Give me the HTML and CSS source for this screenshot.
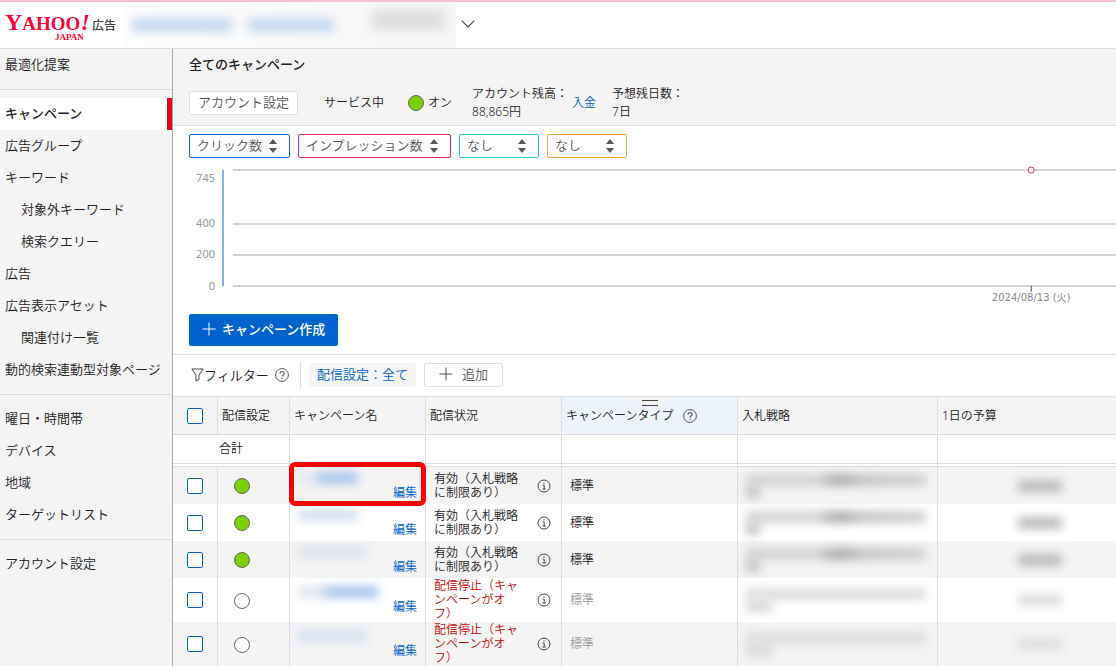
FILE: index.html
```html
<!DOCTYPE html>
<html lang="ja">
<head>
<meta charset="utf-8">
<title>Yahoo! JAPAN 広告</title>
<link rel="stylesheet" href="styles.css">
</head>
<body>
<svg class="defs" width="0" height="0" aria-hidden="true">
  <symbol id="help" viewBox="0 0 14 14"><circle cx="7" cy="7" r="6.4" fill="none" stroke="#555"/><path d="M5 5.6c0-2.8 4.1-2.7 4.1-.2 0 1.5-2.1 1.6-2.1 3.2M7 9.8v1.3" fill="none" stroke="#555" stroke-width="1.1"/></symbol>
  <symbol id="info" viewBox="0 0 14 14"><circle cx="7" cy="7" r="6" fill="none" stroke="#444"/><path d="M5.7 6.1H7.2V10M5.4 10h3.4M7 3.4v1.3" fill="none" stroke="#444"/></symbol>
  <symbol id="sort" viewBox="0 0 8 14"><path d="M4 0 8 5H0zM4 14 0 9H8z" fill="#555"/></symbol>
  <symbol id="plus" viewBox="0 0 14 14"><path d="M7 .5v13M.5 7h13" fill="none" stroke="currentColor"/></symbol>
</svg>

<header class="topbar">
  <a class="logo" href="#">
    <span class="brand"><span class="yahoo"><span class="big">Y</span>AHOO<i class="big">!</i></span><span class="japan">JAPAN</span></span>
    <span class="product">広告</span>
  </a>
  <div class="account" aria-hidden="true">
    <span class="smudge blue account-a"></span>
    <span class="smudge blue account-b"></span>
    <span class="smudge grey account-c"></span>
  </div>
  <button class="chevron" aria-label="アカウントを開く"><svg width="14" height="8" viewBox="0 0 14 8"><path d="M.7.7 7 7 13.300.7" fill="none" stroke="#444" stroke-width="1.1"/></svg></button>
</header>

<div class="layout">
  <nav class="sidebar">
    <div class="group"><a href="#">最適化提案</a></div>
    <div class="group">
      <a href="#" class="current">キャンペーン</a>
      <a href="#">広告グループ</a>
      <a href="#">キーワード</a>
      <a href="#" class="sub">対象外キーワード</a>
      <a href="#" class="sub">検索クエリー</a>
      <a href="#">広告</a>
      <a href="#">広告表示アセット</a>
      <a href="#" class="sub">関連付け一覧</a>
      <a href="#">動的検索連動型対象ページ</a>
    </div>
    <div class="group">
      <a href="#">曜日・時間帯</a>
      <a href="#">デバイス</a>
      <a href="#">地域</a>
      <a href="#">ターゲットリスト</a>
    </div>
    <div class="group"><a href="#">アカウント設定</a></div>
  </nav>

  <main class="main">
    <section class="summary">
      <h1>全てのキャンペーン</h1>
      <div class="facts">
        <button class="plain">アカウント設定</button>
        <span class="service">サービス中</span>
        <span class="state"><span class="dot on"></span>オン</span>
        <span class="balance">アカウント残高：<br>88,865円</span>
        <a class="deposit" href="#">入金</a>
        <span>予想残日数：<br>7日</span>
      </div>
    </section>

    <section class="report">
      <div class="metrics">
        <span class="metric m1"><select aria-label="指標1"><option>クリック数</option></select><svg width="8" height="14"><use href="#sort"/></svg></span>
        <span class="metric m2"><select aria-label="指標2"><option>インプレッション数</option></select><svg width="8" height="14"><use href="#sort"/></svg></span>
        <span class="metric m3"><select aria-label="指標3"><option>なし</option></select><svg width="8" height="14"><use href="#sort"/></svg></span>
        <span class="metric m4"><select aria-label="指標4"><option>なし</option></select><svg width="8" height="14"><use href="#sort"/></svg></span>
      </div>
      <svg class="chart" role="img" aria-label="インプレッション数の推移">
        <g class="grid">
          <line x1="44" x2="100%" y1="12" y2="12"/>
          <line x1="44" x2="100%" y1="66" y2="66"/>
          <line x1="44" x2="100%" y1="97" y2="97"/>
          <line x1="44" x2="100%" y1="128" y2="128"/>
        </g>
        <line class="axis" x1="34" x2="34" y1="12" y2="128"/>
        <g class="scale">
          <text x="26" y="24">745</text>
          <text x="26" y="69">400</text>
          <text x="26" y="100">200</text>
          <text x="26" y="132">0</text>
        </g>
        <line class="tick" x1="90.85%" x2="90.85%" y1="128" y2="134"/>
        <circle class="point" cx="90.85%" cy="12" r="3"/>
        <text class="date" x="90.85%" y="143">2024/08/13 (火)</text>
      </svg>
      <button class="create"><svg width="14" height="14"><use href="#plus"/></svg>キャンペーン作成</button>
    </section>

    <section class="filters">
      <div class="filter-name">
        <svg width="13" height="14" viewBox="0 0 13 14"><path d="M.8 1h11.400L8 7v4.200L5 13V7z" fill="none" stroke="#444" stroke-linejoin="round"/></svg>
        <span>フィルター</span>
        <svg class="filter-help" width="14" height="14"><use href="#help"/></svg>
      </div>
      <button class="chip">配信設定：全て</button>
      <button class="plain add"><svg width="14" height="14"><use href="#plus"/></svg>追加</button>
    </section>

    <table class="list">
      <colgroup><col class="c-check"><col class="c-toggle"><col class="c-name"><col class="c-status"><col class="c-type"><col class="c-bid"><col></colgroup>
      <thead>
        <tr>
          <th class="check"><input type="checkbox" aria-label="全て選択"></th>
          <th>配信設定</th>
          <th>キャンペーン名</th>
          <th>配信状況</th>
          <th class="hovered"><span class="grip"></span><span class="with-help">キャンペーンタイプ<svg width="14" height="14"><use href="#help"/></svg></span></th>
          <th>入札戦略</th>
          <th>1日の予算</th>
        </tr>
        <tr class="total"><td colspan="2">合計</td><td></td><td></td><td></td><td></td><td></td></tr>
      </thead>
      <tbody>
        <tr>
          <td class="check"><input type="checkbox" aria-label="行1を選択"></td>
          <td class="toggle"><span class="dot on"></span></td>
          <td class="name"><span class="callout"></span><div><span class="smudge blue strong short"></span><a href="#">編集</a></div></td>
          <td><div class="status"><span>有効（入札戦略に制限あり）</span><svg width="14" height="14"><use href="#info"/></svg></div></td>
          <td class="type">標準</td>
          <td class="bid"><span class="smudge line"></span><span class="smudge rest"></span></td>
          <td class="budget"><span class="smudge"></span></td>
        </tr>
        <tr>
          <td class="check"><input type="checkbox" aria-label="行2を選択"></td>
          <td class="toggle"><span class="dot on"></span></td>
          <td class="name"><div><span class="smudge blue short"></span><a href="#">編集</a></div></td>
          <td><div class="status"><span>有効（入札戦略に制限あり）</span><svg width="14" height="14"><use href="#info"/></svg></div></td>
          <td class="type">標準</td>
          <td class="bid"><span class="smudge line"></span><span class="smudge rest"></span></td>
          <td class="budget"><span class="smudge"></span></td>
        </tr>
        <tr>
          <td class="check"><input type="checkbox" aria-label="行3を選択"></td>
          <td class="toggle"><span class="dot on"></span></td>
          <td class="name"><div><span class="smudge blue faint"></span><a href="#">編集</a></div></td>
          <td><div class="status"><span>有効（入札戦略に制限あり）</span><svg width="14" height="14"><use href="#info"/></svg></div></td>
          <td class="type">標準</td>
          <td class="bid"><span class="smudge line"></span><span class="smudge rest"></span></td>
          <td class="budget"><span class="smudge"></span></td>
        </tr>
        <tr class="off">
          <td class="check"><input type="checkbox" aria-label="行4を選択"></td>
          <td class="toggle"><span class="dot"></span></td>
          <td class="name"><div><span class="smudge blue strong long"></span><a href="#">編集</a></div></td>
          <td><div class="status"><span>配信停止（キャンペーンがオフ）</span><svg width="14" height="14"><use href="#info"/></svg></div></td>
          <td class="type">標準</td>
          <td class="bid"><span class="smudge line"></span><span class="smudge rest"></span></td>
          <td class="budget"><span class="smudge"></span></td>
        </tr>
        <tr class="off">
          <td class="check"><input type="checkbox" aria-label="行5を選択"></td>
          <td class="toggle"><span class="dot"></span></td>
          <td class="name"><div><span class="smudge blue"></span><a href="#">編集</a></div></td>
          <td><div class="status"><span>配信停止（キャンペーンがオフ）</span><svg width="14" height="14"><use href="#info"/></svg></div></td>
          <td class="type">標準</td>
          <td class="bid"><span class="smudge line"></span><span class="smudge rest"></span></td>
          <td class="budget"><span class="smudge"></span></td>
        </tr>
      </tbody>
    </table>
  </main>
</div>
</body>
</html>
```

FILE: styles.css
```css
* { box-sizing: border-box; }

body {
  margin: 0;
  min-height: 100vh;
  display: flex;
  flex-direction: column;
  font: 350 12px/18px "Noto Sans", "Noto Sans CJK JP", sans-serif;
  color: #222;
  background: #fff;
}

a { color: #0062cc; text-decoration: none; }
button, select, input { font: inherit; margin: 0; }
button { cursor: pointer; }
svg { flex: none; }
.defs { position: absolute; }

/* header */
.topbar {
  display: flex;
  height: 49px;
  border-top: 2px solid #f5c3cb;
  border-bottom: 1px solid #ddd;
}
.logo {
  display: flex;
  width: 124px;
  padding: 12px 0 0 5px;
  gap: 2px;
}
.brand {
  display: flex;
  flex-direction: column;
  width: 85px;
  color: #ff0033;
  font-family: "Liberation Serif", serif;
  font-weight: bold;
}
.yahoo { font-size: 19px; line-height: 17px; white-space: nowrap; }
.yahoo .big { font-size: 24px; line-height: 17px; }
.japan { font-size: 9px; line-height: 10px; padding-left: 50px; }
.product { color: #444; font-size: 12px; line-height: 24px; font-weight: 500; }
.account {
  display: flex;
  align-items: flex-start;
  width: 332px;
  padding: 8px 8px 0;
  overflow: hidden;
  background: linear-gradient(90deg, #fdfdfd, #f6f6f6);
}
.chevron { display: flex; align-items: center; border: 0; background: none; padding: 0 5px 2px; }

/* blurred-out values */
.smudge { display: block; flex: none; filter: blur(5px); background: #ddd; }
.smudge.blue { background: #d5e0f0; }
.account-a { width: 100px; height: 14px; margin-top: 8px; }
.account-b { width: 86px; height: 14px; margin: 8px 0 0 16px; }
.smudge.grey { width: 72px; height: 20px; margin-left: 38px; background: #dedede; }
.account .smudge.blue { background: #c6d9f1; }

.layout { display: flex; flex: 1; }

/* side menu */
.sidebar {
  flex: none;
  width: 173px;
  background: #f4f4f4;
  border-right: 1px solid #aaa;
  font-size: 13px;
}
.group { padding: 8px 0; }
.group:first-child { padding-top: 0; }
.group + .group { border-top: 1px solid #ddd; }
.sidebar a {
  display: block;
  height: 32px;
  padding-left: 5px;
  line-height: 30px;
  color: #222;
  white-space: nowrap;
}
.sidebar .sub { padding-left: 21px; }
.sidebar .current { background: #fff; border-right: 5px solid #e60020; font-weight: 500; }

/* main */
.main { flex: 1; min-width: 0; }
.summary {
  height: 77px;
  padding: 6px 16px 0;
  background: #f4f4f4;
  border-bottom: 1px solid #ddd;
}
h1 { margin: 0; font-size: 13px; line-height: 18px; font-weight: 500; }
.facts { display: flex; align-items: center; height: 60px; white-space: nowrap; }
.plain {
  height: 24px;
  padding: 0 8px 2px;
  border: 1px solid #ddd;
  border-radius: 2px;
  background: #fff;
  color: #555;
  font-size: 13px;
  line-height: 20px;
}
.service { margin-left: 26px; }
.state { display: flex; align-items: center; gap: 4px; margin: 0 20px 0 24px; }
.deposit { margin: 0 16px 0 4px; }
.dot {
  display: block;
  width: 16px;
  height: 16px;
  border: 1px solid #666;
  border-radius: 50%;
  background: #fff;
}
.dot.on { background: #7ad000; }

.report { padding: 8px 0 8px 16px; border-bottom: 1px solid #ddd; }
.metrics { display: flex; gap: 8px; }
.metric { position: relative; display: flex; }
.metric select {
  appearance: none;
  width: 100%;
  height: 24px;
  padding: 0 7px 2px;
  border: 1px solid;
  border-radius: 2px;
  background: #fff;
  color: #555;
  font-size: 13px;
  line-height: 20px;
}
.metric svg { position: absolute; right: 13px; top: 5px; pointer-events: none; }
.m1 { width: 101px; }
.m1 select { border-color: #0b6bc9; }
.m2 { width: 153px; }
.m2 select { border-color: #e6245c; }
.m3, .m4 { width: 80px; }
.m3 select { border-color: #26c9c9; }
.m4 select { border-color: #faa53c; }

.chart { display: block; width: 100%; height: 156px; }
.grid line { stroke: #d2d2d2; stroke-width: 2; }
.axis { stroke: #7db4e3; stroke-width: 2; }
.tick { stroke: #444; }
.point { fill: #fff; stroke: #e6245c; }
.scale text { fill: #999; font-size: 11px; font-weight: 400; text-anchor: end; }
.date { fill: #888; font-size: 10px; font-weight: 400; text-anchor: middle; font-family: "DejaVu Sans", "Noto Sans CJK JP", sans-serif; }

.create {
  display: flex;
  align-items: center;
  gap: 6px;
  height: 32px;
  padding: 0 13px 2px;
  border: 0;
  border-radius: 2px;
  background: #0062cc;
  color: #fff;
  font-size: 13px;
  font-weight: 500;
  white-space: nowrap;
}

.filters { display: flex; align-items: center; height: 41px; padding: 0 16px 2px; }
.filter-name {
  display: flex;
  align-items: center;
  height: 26px;
  width: 112px;
  padding-left: 2px;
  border-right: 1px solid #ddd;
  font-size: 13px;
}
.filter-help { margin-left: 6px; }
.chip {
  height: 24px;
  margin: 0 8px;
  padding: 0 8px 2px;
  border: 0;
  border-radius: 2px;
  background: #f4f4f4;
  color: #0062cc;
  font-size: 13px;
  line-height: 20px;
}
.add { display: flex; align-items: center; gap: 9px; padding: 0 14px 1px; }

/* campaign table */
.list { width: 100%; table-layout: fixed; border-collapse: separate; border-spacing: 0; }
.c-check { width: 45px; }
.c-toggle { width: 72px; }
.c-name, .c-status { width: 136px; }
.c-type { width: 176px; }
.c-bid { width: 200px; }
.list th, .list td { padding: 0; border-right: 1px solid #ddd; }
.list th:last-child, .list td:last-child { border-right: 0; }
.list th {
  position: relative;
  height: 39px;
  padding-left: 4px;
  border-top: 1px solid #ddd;
  border-bottom: 1px solid #ddd;
  background: #f4f4f4;
  font-weight: inherit;
  text-align: left;
  white-space: nowrap;
}
.list .hovered { background: #ecf3fa; }
.grip {
  position: absolute;
  top: 0;
  left: calc(50% - 16px);
  width: 32px;
  height: 8px;
  background: #f4f4f4;
}
.grip::after {
  content: "";
  position: absolute;
  left: 8px;
  top: 3px;
  width: 16px;
  height: 4px;
  border: solid #444;
  border-width: 1px 0;
}
.with-help { display: flex; align-items: center; gap: 10px; }
.list .total td { height: 32px; border-bottom: 4px double #ddd; text-align: center; }
.list tbody td { height: 37px; }
.list .off td { height: 44px; }
.list tbody tr:nth-child(odd) { background: #f4f4f4; }
.list .check { padding-left: 14px; }
.check input {
  appearance: none;
  display: block;
  width: 16px;
  height: 16px;
  border: 1px solid #0062cc;
  border-radius: 2px;
  background: #fff;
}
.toggle .dot { margin: 1px 0 0 16px; }
.name { position: relative; }
.name div { display: flex; flex-direction: column; gap: 2px; padding: 0 8px; line-height: 14px; }
.name a { align-self: flex-end; }
.name .smudge { width: 68px; height: 12px; }
.name .strong { background: linear-gradient(90deg, #e2e8f0 25%, #a9c6ec 40%); }
.name .short { width: 60px; }
.name .long { width: 80px; }
.name .faint { background: #dee2ea; }
.callout {
  position: absolute;
  z-index: 1;
  top: -5px;
  left: -1px;
  right: -1px;
  bottom: -2px;
  border: 5px solid #f00;
  border-radius: 6px;
}
.status { display: flex; align-items: center; justify-content: space-between; padding: 0 10px 0 8px; line-height: 14px; }
.status span { width: 86px; }
.off .status span { color: #c00; }
.list .type { padding-left: 8px; }
.off .type { color: #999; }
.bid .smudge { margin-left: 8px; }
.bid .line { width: 180px; height: 12px; background: linear-gradient(90deg, #d4d4d4 40%, #b4b4b4 46%, #aaa 54%, #c4c4c4 64%, #d0d0d0); }
.bid .rest { width: 14px; height: 12px; background: #c4c4c4; }
.off .bid .line { background: #dedede; }
.off .bid .rest { width: 26px; background: #d8d8d8; }
.budget .smudge { width: 44px; height: 12px; margin-left: 80px; background: #bbb; }
.off .budget .smudge { background: #dedede; }
```
